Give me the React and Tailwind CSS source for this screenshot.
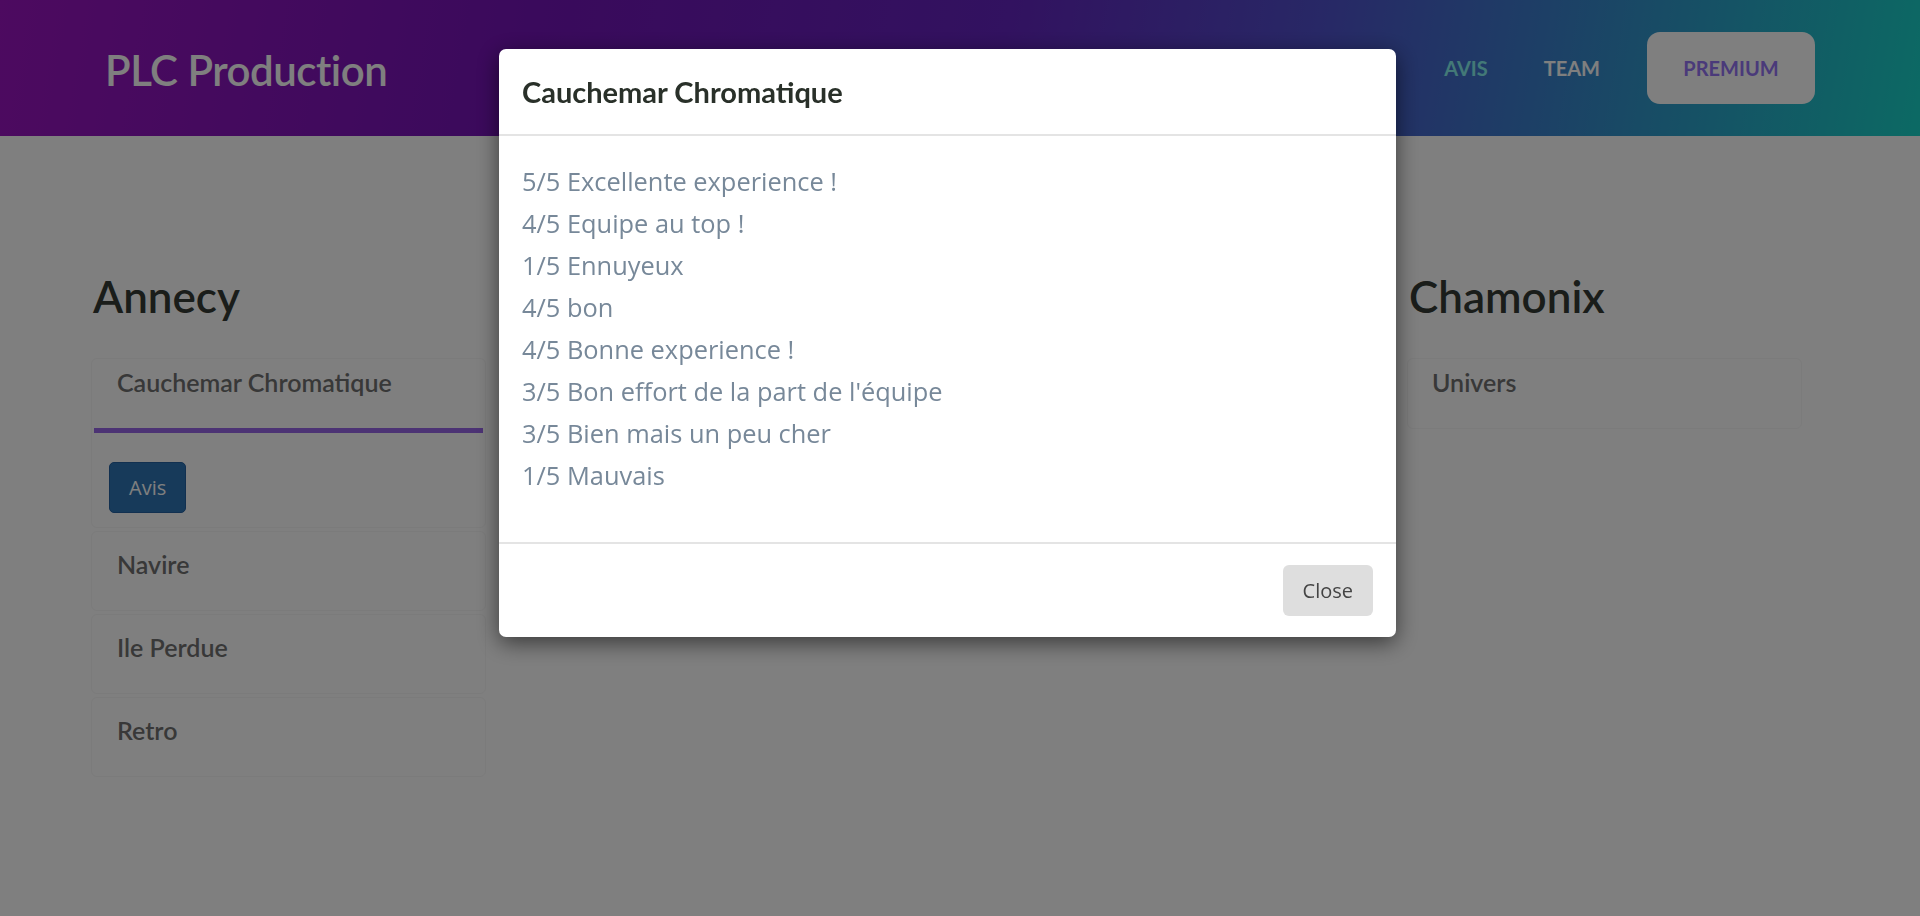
import { useState } from 'react';

const reviews = [
  '5/5 Excellente experience !',
  '4/5 Equipe au top !',
  '1/5 Ennuyeux',
  '4/5 bon',
  '4/5 Bonne experience !',
  "3/5 Bon effort de la part de l'équipe",
  '3/5 Bien mais un peu cher',
  '1/5 Mauvais',
];

const cities = [
  { name: 'Annecy', rooms: ['Cauchemar Chromatique', 'Navire', 'Ile Perdue', 'Retro'] },
  { name: '', rooms: [] },
  { name: 'Chamonix', rooms: ['Univers'] },
];

export default function App() {
  const [open, setOpen] = useState(true)
  const [active, setActive] = useState('Cauchemar Chromatique')

  return (
    <div className="relative min-h-screen bg-white font-['Lato',sans-serif]">
      {/* navbar */}
      <header className="flex h-[136px] items-center justify-between bg-[linear-gradient(100deg,#9a14c0_0%,#7414b8_28%,#6424c0_52%,#5050cc_68%,#3a80cc_80%,#18d4c8_100%)] pl-[105px] pr-[105px]">
        <a href="#" className="pt-[4px] text-[42px] font-semibold tracking-[-0.5px] text-white">PLC Production</a>
        <nav className="flex items-center">
          <a href="#" className="text-[20px] font-bold text-[#86f2ee]">AVIS</a>
          <a href="#" className="ml-[56px] text-[20px] font-bold text-white">TEAM</a>
          <a href="#" className="ml-[47px] flex h-[72px] w-[168px] items-center justify-center rounded-[13px] bg-white text-[20px] font-bold text-[#9474f4]">PREMIUM</a>
        </nav>
      </header>

      {/* cities */}
      <main className="grid grid-cols-[395px_395px_395px] gap-x-[263px] pl-[91px] pt-[134px] pb-[80px]">
        {cities.map((city, i) => (
          <section key={i}>
            <h2 className="ml-[2px] h-[53px] text-[44px] font-semibold leading-[53px] text-[#343a34]">{city.name}</h2>
            <div className="mt-[35px] flex flex-col gap-[3px]">
              {city.rooms.map((room, k) => {
                if (room == active && city.name == 'Annecy') {
                  return (
                    <div key={room} className="rounded-[6px] border border-[#f6f6f6]">
                      <div className="h-[69px] pl-[25px] pt-[8px] text-[25px] font-semibold leading-[30px] text-[#717171]">{room}</div>
                      <div className="mx-[2px] h-[5px] bg-[#9866e8]"></div>
                      <div className="pl-[17px] pt-[29px] pb-[14px]">
                        <button onClick={() => setOpen(true)} className="h-[51px] rounded-[5px] border border-[#2460a0] bg-[#2e74b4] px-[19px] font-['Open_Sans',sans-serif] text-[20px] text-white">Avis</button>
                      </div>
                    </div>
                  )
                }
                if (k == 0) {
                  return (
                    <div key={room} onClick={() => setActive(room)} className="h-[71px] rounded-[6px] border border-[#f6f6f6] pl-[24px] pt-[8px] text-[25px] font-semibold leading-[30px] text-[#717171]">{room}</div>
                  )
                }
                return (
                  <div key={room} onClick={() => setActive(room)} className="h-[80px] rounded-[6px] border border-[#f6f6f6] pl-[25px] pt-[17px] text-[25px] font-semibold leading-[30px] text-[#717171]">{room}</div>
                )
              })}
            </div>
          </section>
        ))}
      </main>

      {/* modal */}
      {open && (
        <div className="fixed inset-0 flex justify-center bg-black/50 pr-[25px] pt-[49px]">
          <div className="h-fit w-[897px] rounded-[7px] bg-white shadow-[0_6px_22px_rgba(0,0,0,0.55)]">
            <div className="flex h-[87px] items-center border-b-2 border-[#e4e4e4] px-[23px]">
              <h5 className="text-[29px] font-bold text-[#293029]">Cauchemar Chromatique</h5>
            </div>
            <div className="px-[23px] pt-[24px] pb-[46px] font-['Open_Sans',sans-serif] text-[25.4px] leading-[42px] text-[#778899]">
              {reviews.map((r, k) => (
                <p key={k}>{r}</p>
              ))}
            </div>
            <div className="flex h-[95px] items-center justify-end border-t-2 border-[#e4e4e4] px-[23px]">
              <button onClick={() => setOpen(false)} className="h-[51px] rounded-[6px] bg-[#dedede] px-[20px] font-['Open_Sans',sans-serif] text-[20px] text-[#444444]">Close</button>
            </div>
          </div>
        </div>
      )}
    </div>
  )
}
